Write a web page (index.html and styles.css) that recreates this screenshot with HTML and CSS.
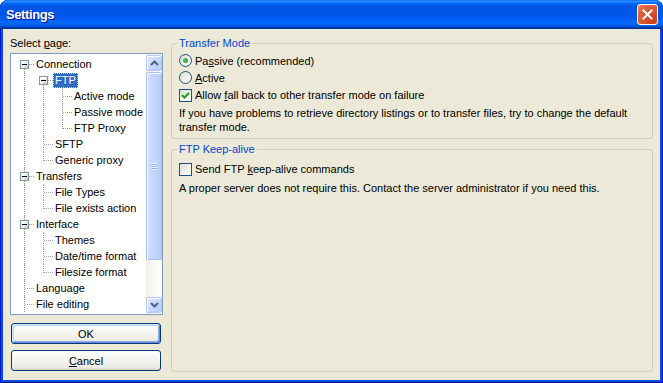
FILE: index.html
```html
<!DOCTYPE html>
<html lang="en">
<head>
    <meta charset="UTF-8">
    <title>Settings</title>
    <link rel="stylesheet" href="styles.css">
</head>
<body>
    <div class="window">
        <div class="titlebar">
            <span class="title">Settings</span>
            <button class="close" aria-label="Close">
                <svg width="11" height="11" viewBox="0 0 11 11"><path d="M1.5 1.5 L9.5 9.5 M9.5 1.5 L1.5 9.5" stroke="#fff" stroke-width="2" stroke-linecap="square"/></svg>
            </button>
        </div>

        <div class="dialog">
            <div class="side">
                <div class="side-label">Select <u>p</u>age:</div>
                <div class="tree">
                    <ul class="tree-list">
                        <li class="row"><span class="cell exp down"><span class="box"></span></span><span class="text">Connection</span></li>
                        <li class="row"><span class="cell pipe"></span><span class="cell exp down"><span class="box"></span></span><span class="text selected">FTP</span></li>
                        <li class="row"><span class="cell pipe"></span><span class="cell pipe"></span><span class="cell tee"></span><span class="text">Active mode</span></li>
                        <li class="row"><span class="cell pipe"></span><span class="cell pipe"></span><span class="cell tee"></span><span class="text">Passive mode</span></li>
                        <li class="row"><span class="cell pipe"></span><span class="cell pipe"></span><span class="cell elbow"></span><span class="text">FTP Proxy</span></li>
                        <li class="row"><span class="cell pipe"></span><span class="cell tee"></span><span class="text">SFTP</span></li>
                        <li class="row"><span class="cell pipe"></span><span class="cell elbow"></span><span class="text">Generic proxy</span></li>
                        <li class="row"><span class="cell exp both"><span class="box"></span></span><span class="text">Transfers</span></li>
                        <li class="row"><span class="cell pipe"></span><span class="cell tee"></span><span class="text">File Types</span></li>
                        <li class="row"><span class="cell pipe"></span><span class="cell elbow"></span><span class="text">File exists action</span></li>
                        <li class="row"><span class="cell exp both"><span class="box"></span></span><span class="text">Interface</span></li>
                        <li class="row"><span class="cell pipe"></span><span class="cell tee"></span><span class="text">Themes</span></li>
                        <li class="row"><span class="cell pipe"></span><span class="cell tee"></span><span class="text">Date/time format</span></li>
                        <li class="row"><span class="cell pipe"></span><span class="cell elbow"></span><span class="text">Filesize format</span></li>
                        <li class="row"><span class="cell tee"></span><span class="text">Language</span></li>
                        <li class="row"><span class="cell tee"></span><span class="text">File editing</span></li>
                    </ul>
                    <div class="scrollbar">
                        <div class="sb-btn">
                            <svg width="9" height="6" viewBox="0 0 9 6"><path d="M1 5 L4.5 1.5 L8 5" fill="none" stroke="#4D6185" stroke-width="2"/></svg>
                        </div>
                        <div class="sb-thumb">
                            <div class="grip"></div>
                        </div>
                        <div class="sb-track"></div>
                        <div class="sb-btn">
                            <svg width="9" height="6" viewBox="0 0 9 6"><path d="M1 1 L4.5 4.5 L8 1" fill="none" stroke="#4D6185" stroke-width="2"/></svg>
                        </div>
                    </div>
                </div>
                <button class="btn default">OK</button>
                <button class="btn"><u>C</u>ancel</button>
            </div>

            <div class="main">
                <fieldset class="group">
                    <legend>Transfer Mode</legend>
                    <div class="option">
                        <span class="radio checked"></span>
                        <span>Pa<u>s</u>sive (recommended)</span>
                    </div>
                    <div class="option">
                        <span class="radio"></span>
                        <span><u>A</u>ctive</span>
                    </div>
                    <div class="option check-row">
                        <span class="checkbox">
                            <svg width="11" height="11" viewBox="0 0 11 11"><path d="M2 5 L4.5 7.5 L9 3" fill="none" stroke="#21A121" stroke-width="2.2"/></svg>
                        </span>
                        <span>Allow <u>f</u>all back to other transfer mode on failure</span>
                    </div>
                    <p class="desc">If you have problems to retrieve directory listings or to transfer files, try to change the default transfer mode.</p>
                </fieldset>

                <fieldset class="group grow">
                    <legend>FTP Keep-alive</legend>
                    <div class="option check-row first">
                        <span class="checkbox"></span>
                        <span>Send FTP <u>k</u>eep-alive commands</span>
                    </div>
                    <p class="desc spaced">A proper server does not require this. Contact the server administrator if you need this.</p>
                </fieldset>
            </div>
        </div>
    </div>
</body>
</html>
```

FILE: styles.css
```css
:root {
    --face: #ECE9D8;
    --group-border: #D0D0BF;
    --legend: #0046D5;
    --tree-border: #7F9DB9;
    --tree-line: #A0A0A0;
    --control-border: #1C5180;
}

* {
    box-sizing: border-box;
    margin: 0;
    padding: 0;
}

html {
    background: #fff;
}

body {
    font-family: "Liberation Sans", Arial, sans-serif;
    font-size: 11px;
    color: #000;
}

/* window frame */
.window {
    width: 663px;
    height: 383px;
    display: flex;
    flex-direction: column;
    background: #0A4BDC;
    border-radius: 8px 8px 0 0;
    box-shadow: inset 1px 0 #0019CF, inset -1px 0 #0019CF, inset 0 -1px #00138C;
}

.titlebar {
    height: 29px;
    display: flex;
    align-items: center;
    justify-content: space-between;
    padding: 0 5px 0 6px;
    border-radius: 8px 8px 0 0;
    background: linear-gradient(to bottom,
        #0058EE 0%, #3593FF 4%, #288EFF 6%, #127DFF 8%, #036FFC 10%,
        #0262EE 14%, #0057E5 20%, #0054E3 24%, #0055EB 56%, #005BF5 66%,
        #026AFE 76%, #0062EF 86%, #0052D6 92%, #0040AB 94%, #003092 100%);
}

.title {
    color: #fff;
    font-weight: bold;
    font-size: 13px;
    letter-spacing: -0.4px;
    text-shadow: 1px 1px #0F1089;
}

.close {
    width: 21px;
    height: 21px;
    display: flex;
    align-items: center;
    justify-content: center;
    border: 1px solid #fff;
    border-radius: 3px;
    background: radial-gradient(circle at 85% 85%, #C7401C 0%, #D64F2A 40%, #E26A45 80%, #EE9E80 100%);
}

/* dialog body */
.dialog {
    flex: 1;
    margin: 0 3px 3px;
    background: var(--face);
    display: flex;
    gap: 8px;
    padding: 7px 7px 8px 7px;
}

.side {
    width: 153px;
    display: flex;
    flex-direction: column;
}

.side-label {
    line-height: 14px;
    margin-bottom: 3px;
}

/* tree view */
.tree {
    height: 262px;
    border: 1px solid var(--tree-border);
    background: #fff;
    display: flex;
}

.tree-list {
    flex: 1;
    list-style: none;
    padding: 2px 0 0 4px;
    overflow: hidden;
}

.row {
    display: flex;
    align-items: center;
    height: 16px;
    white-space: nowrap;
}

.cell {
    position: relative;
    flex: none;
    width: 19px;
    height: 16px;
}

.cell::before,
.cell::after {
    content: '';
    position: absolute;
}

.pipe::before,
.tee::before {
    left: 9px;
    top: 0;
    bottom: 0;
    border-left: 1px dotted var(--tree-line);
}

.elbow::before {
    left: 9px;
    top: 0;
    height: 9px;
    border-left: 1px dotted var(--tree-line);
}

.tee::after,
.elbow::after,
.exp::after {
    left: 10px;
    right: 0;
    top: 8px;
    border-top: 1px dotted var(--tree-line);
}

.exp::after {
    left: 14px;
}

.exp.down::before {
    left: 9px;
    top: 13px;
    bottom: 0;
    border-left: 1px dotted var(--tree-line);
}

.exp.both::before {
    left: 9px;
    top: 0;
    bottom: 0;
    border-left: 1px dotted var(--tree-line);
}

.box {
    position: relative;
    z-index: 1;
    display: flex;
    align-items: center;
    justify-content: center;
    width: 9px;
    height: 9px;
    margin: 4px 0 0 5px;
    border: 1px solid #7A98AF;
    background: linear-gradient(135deg, #fff 30%, #C8C5B5 100%);
}

.box::before {
    content: '';
    width: 5px;
    height: 1px;
    background: #000;
}

.text {
    line-height: 15px;
    height: 15px;
    padding: 0 2px;
    margin-top: 1px;
}

.selected {
    background: #316AC5;
    color: #fff;
    outline: 1px dotted #F5C888;
    outline-offset: -1px;
}

/* scrollbar */
.scrollbar {
    width: 16px;
    display: flex;
    flex-direction: column;
    padding: 1px 0;
    background: linear-gradient(to right, #F3F1EC, #FEFEFB);
}

.sb-btn {
    height: 16px;
    flex: none;
    display: flex;
    align-items: center;
    justify-content: center;
    border: 1px solid #B4C8F6;
    border-radius: 2px;
    background: linear-gradient(135deg, #E1EAFE 0%, #C5D6FC 60%, #B4C8F6 100%);
    box-shadow: inset 1px 1px #fff;
}

.sb-thumb {
    height: 188px;
    flex: none;
    margin-top: 1px;
    display: flex;
    align-items: center;
    justify-content: center;
    border: 1px solid #A9BFEF;
    border-radius: 2px;
    background: linear-gradient(to right, #D2DEFD 0%, #C5D5FC 50%, #B9CCF7 100%);
    box-shadow: inset 1px 1px #fff;
}

.grip {
    width: 7px;
    height: 7px;
    background: repeating-linear-gradient(to bottom, #EEF4FE 0 1px, #8CB0F8 1px 2px);
}

.sb-track {
    flex: 1;
}

/* buttons */
.btn {
    width: 150px;
    height: 21px;
    margin-left: 1px;
    font-family: inherit;
    font-size: 11px;
    color: #000;
    border: 1px solid #003C74;
    border-radius: 3px;
    background: linear-gradient(to bottom, #fff 0%, #F4F3EE 50%, #ECEBE6 85%, #D6D0C5 100%);
}

.btn.default {
    margin-top: 8px;
    box-shadow: inset 1px 1px #CEE7FF, inset -1px -1px #6982EE, inset 2px 2px #BCD4F6, inset -2px -2px #89ADE4;
}

.btn + .btn {
    margin-top: 6px;
}

/* right panel */
.main {
    flex: 1;
    display: flex;
    flex-direction: column;
    gap: 3px;
}

.group {
    border: 1px solid var(--group-border);
    border-radius: 3px;
    padding: 2px 7px 4px;
    min-width: 0;
}

.group.grow {
    flex: 1;
}

.group legend {
    color: var(--legend);
    line-height: 14px;
    padding: 0 2px;
    margin-left: -2px;
}

.option {
    display: flex;
    align-items: center;
    gap: 3px;
    height: 17px;
}

.check-row {
    height: 18px;
}

.check-row.first {
    margin-top: 2px;
}

.radio {
    width: 13px;
    height: 13px;
    flex: none;
    display: flex;
    align-items: center;
    justify-content: center;
    border: 1px solid var(--control-border);
    border-radius: 50%;
    background: linear-gradient(135deg, #DCDCD7 0%, #F4F3EE 60%, #fff 100%);
}

.radio.checked::before {
    content: '';
    width: 5px;
    height: 5px;
    border-radius: 50%;
    background: radial-gradient(circle at 40% 40%, #5BD85B 0%, #21A121 70%, #1A8A1A 100%);
}

.checkbox {
    width: 13px;
    height: 13px;
    flex: none;
    display: flex;
    align-items: center;
    justify-content: center;
    border: 1px solid var(--control-border);
    background: linear-gradient(135deg, #DCDCD7 0%, #F4F3EE 60%, #fff 100%);
}

.desc {
    line-height: 14px;
    margin-top: 2px;
}

.desc.spaced {
    margin-top: 3px;
}
```
